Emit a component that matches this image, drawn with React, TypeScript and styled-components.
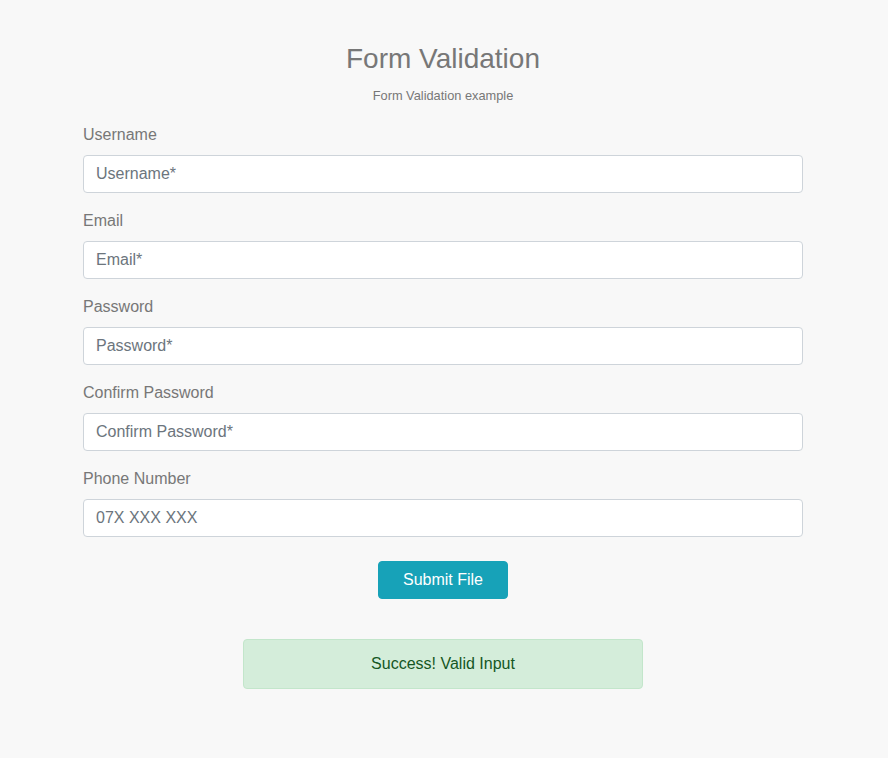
import { FC } from 'react';
import styled, { createGlobalStyle } from 'styled-components';

const GlobalStyle = createGlobalStyle`
  * {
    box-sizing: border-box;
  }
  body {
    margin: 0;
    background-color: #f8f8f8;
    font-family: 'Liberation Sans', Arial, sans-serif;
    color: #777777;
  }
`;

const Page = styled.div`
  min-height: 758px;
  padding: 42px 2px 40px 0;
  display: flex;
  flex-direction: column;
  align-items: center;
`;

const Title = styled.h1`
  margin: 0;
  font-size: 28px;
  font-weight: 400;
  line-height: 34px;
  color: #777777;
`;

const Subtitle = styled.p`
  margin: 10px 0 17px;
  font-size: 12.8px;
  line-height: 20px;
  color: #777777;
`;

const Form = styled.form`
  width: 720px;
  display: flex;
  flex-direction: column;
  align-items: center;
`;

const Group = styled.div`
  width: 100%;
  margin-bottom: 16px;
`;

const Label = styled.label`
  display: block;
  margin-bottom: 8px;
  font-size: 16px;
  line-height: 24px;
  color: #777777;
`;

const Input = styled.input`
  display: block;
  width: 100%;
  height: 38px;
  padding: 6px 12px;
  font-family: inherit;
  font-size: 16px;
  line-height: 24px;
  color: #495057;
  background-color: #ffffff;
  border: 1px solid #ced4da;
  border-radius: 4px;
  outline: none;
  &::placeholder {
    color: #6c757d;
  }
`;

const SubmitButton = styled.button`
  margin-top: 8px;
  width: 130px;
  height: 38px;
  font-family: inherit;
  font-size: 16px;
  color: #ffffff;
  background-color: #17a2b8;
  border: 1px solid #17a2b8;
  border-radius: 4px;
  cursor: pointer;
`;

const Alert = styled.div`
  margin-top: 40px;
  width: 400px;
  height: 50px;
  display: flex;
  align-items: center;
  justify-content: center;
  font-size: 16px;
  color: #155724;
  background-color: #d4edda;
  border: 1px solid #c3e6cb;
  border-radius: 4px;
`;

type Field = { label: string; placeholder: string; type: string };

const fields: Field[] = [
  { label: 'Username', placeholder: 'Username*', type: 'text' },
  { label: 'Email', placeholder: 'Email*', type: 'email' },
  { label: 'Password', placeholder: 'Password*', type: 'password' },
  { label: 'Confirm Password', placeholder: 'Confirm Password*', type: 'password' },
  { label: 'Phone Number', placeholder: '07X XXX XXX', type: 'tel' },
];

const App: FC = () => {
  return (
    <>
      <GlobalStyle />
      <Page>
        <Title>Form Validation</Title>
        <Subtitle>Form Validation example</Subtitle>
        <Form onSubmit={(e) => e.preventDefault()}>
          {fields.map((f) => (
            <Group key={f.label}>
              <Label>{f.label}</Label>
              <Input type={f.type} placeholder={f.placeholder} />
            </Group>
          ))}
          <SubmitButton type="submit">Submit File</SubmitButton>
        </Form>
        <Alert>Success! Valid Input</Alert>
      </Page>
    </>
  );
};

export default App;
